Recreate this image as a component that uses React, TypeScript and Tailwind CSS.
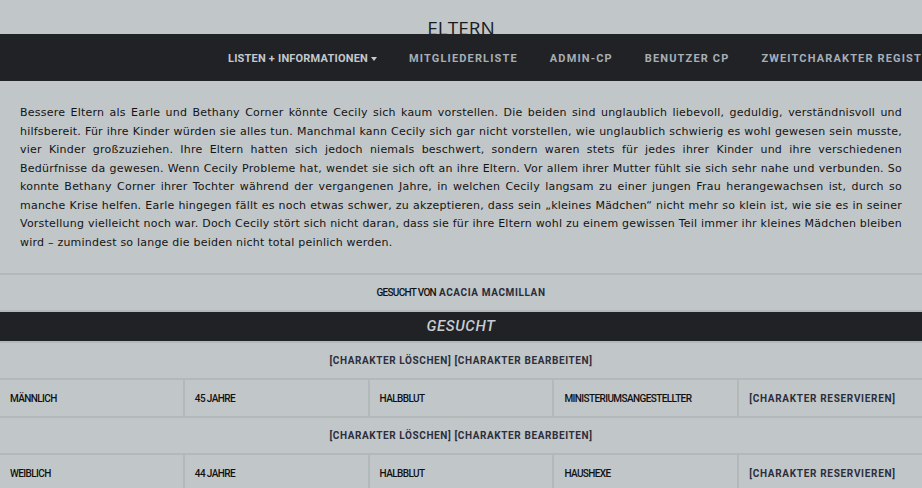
const navItems = ['MITGLIEDERLISTE', 'ADMIN-CP', 'BENUTZER CP', 'ZWEITCHARAKTER REGISTRIEREN'];

const text =
  'Bessere Eltern als Earle und Bethany Corner könnte Cecily sich kaum vorstellen. Die beiden sind unglaublich liebevoll, geduldig, verständnisvoll und hilfsbereit. Für ihre Kinder würden sie alles tun. Manchmal kann Cecily sich gar nicht vorstellen, wie unglaublich schwierig es wohl gewesen sein musste, vier Kinder großzuziehen. Ihre Eltern hatten sich jedoch niemals beschwert, sondern waren stets für jedes ihrer Kinder und ihre verschiedenen Bedürfnisse da gewesen. Wenn Cecily Probleme hat, wendet sie sich oft an ihre Eltern. Vor allem ihrer Mutter fühlt sie sich sehr nahe und verbunden. So konnte Bethany Corner ihrer Tochter während der vergangenen Jahre, in welchen Cecily langsam zu einer jungen Frau herangewachsen ist, durch so manche Krise helfen. Earle hingegen fällt es noch etwas schwer, zu akzeptieren, dass sein „kleines Mädchen“ nicht mehr so klein ist, wie sie es in seiner Vorstellung vielleicht noch war. Doch Cecily stört sich nicht daran, dass sie für ihre Eltern wohl zu einem gewissen Teil immer ihr kleines Mädchen bleiben wird – zumindest so lange die beiden nicht total peinlich werden.';

const wanted = [
  ['MÄNNLICH', '45 JAHRE', 'HALBBLUT', 'MINISTERIUMSANGESTELLTER'],
  ['WEIBLICH', '44 JAHRE', 'HALBBLUT', 'HAUSHEXE'],
];

function ActionLinks() {
  return (
    <div className="h-[35px] bg-[#c1c6c8] flex items-center justify-center text-[10px] font-bold tracking-[0.6px] text-[#2c2e3c] font-['Roboto',sans-serif]">
      [CHARAKTER LÖSCHEN] [CHARAKTER BEARBEITEN]
    </div>
  );
}

export default function App() {
  return (
    <div className="relative w-[922px] h-[488px] overflow-hidden bg-[#c1c6c8]">
      <div className="h-[81px] pt-[19px] text-center">
        <h1 className="text-[19px] leading-none font-normal text-[#1a1b1f] font-['Open_Sans',sans-serif]">
          ELTERN
        </h1>
      </div>

      <nav className="absolute left-0 right-0 top-[34px] h-[47px] pt-[3px] bg-[#212226] flex items-center pl-[228px] gap-[32px] whitespace-nowrap overflow-hidden font-['Roboto',sans-serif] font-bold text-[11px]">
        <span className="flex items-center gap-[3px] tracking-[0.2px] text-[#c3c9ce]">
          LISTEN + INFORMATIONEN
          <span className="w-0 h-0 border-x-[3.5px] border-x-transparent border-t-[4px] border-t-[#c3c9ce]" />
        </span>
        {navItems.map((item) => (
          <span key={item} className="tracking-[1.15px] text-[#a6afb7]">
            {item}
          </span>
        ))}
      </nav>

      <div className="flex flex-col gap-[2px] bg-[#b3b8b8]">
        <div className="bg-[#c1c6c8] px-5 pt-[23px] pb-[21px]">
          <p className="text-justify text-[11px] leading-[18.5px] tracking-[0.22px] text-[#141414] font-['DejaVu_Sans',sans-serif]">
            {text}
          </p>
        </div>

        <div className="h-[35px] bg-[#c1c6c8] flex items-center justify-center gap-[3px] text-[10px] font-['Roboto',sans-serif]">
          <span className="tracking-[-0.7px] font-medium text-[#111]">GESUCHT VON</span>
          <span className="font-bold tracking-[0.6px] text-[#2a2c3a]">ACACIA MACMILLAN</span>
        </div>

        <div className="h-[29px] bg-[#212226] flex items-center justify-center text-[15px] italic font-medium tracking-[0.6px] text-[#c8cdd1] font-['Roboto',sans-serif]">
          GESUCHT
        </div>

        {wanted.map((row, i) => (
          <div key={i} className="flex flex-col gap-[2px]">
            <ActionLinks />
            <div className="grid grid-cols-5 gap-[2px] h-[36px] font-['Roboto',sans-serif] text-[10px]">
              {row.map((cell) => (
                <div key={cell} className="bg-[#c1c6c8] flex items-center px-[10px] font-medium tracking-[-0.6px] text-[#111]">
                  {cell}
                </div>
              ))}
              <div className="bg-[#c1c6c8] flex items-center px-[10px] font-bold tracking-[0.7px] text-[#2c2e3c]">
                [CHARAKTER RESERVIEREN]
              </div>
            </div>
          </div>
        ))}
      </div>
    </div>
  );
}
